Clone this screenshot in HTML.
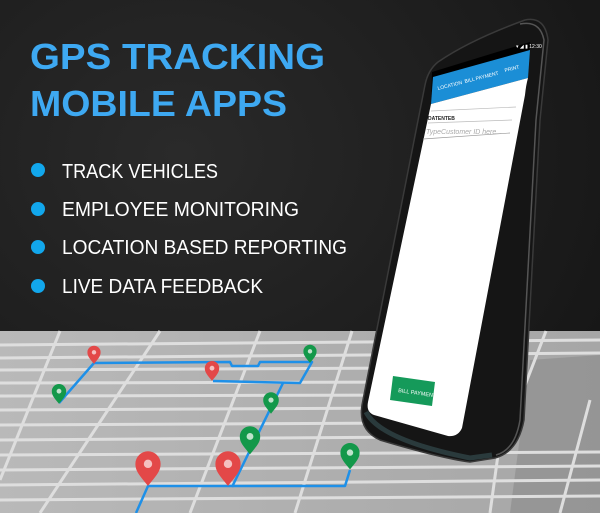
<!DOCTYPE html>
<html><head><meta charset="utf-8"><style>
html,body{margin:0;padding:0;background:#1e1e1e;width:600px;height:513px;overflow:hidden}
svg{display:block}
</style></head><body>
<svg width="600" height="513" viewBox="0 0 600 513" xmlns="http://www.w3.org/2000/svg">
<defs>
<radialGradient id="bg" cx="0.3" cy="0.3" r="0.9"><stop offset="0" stop-color="#2a2a2a"/><stop offset="1" stop-color="#141414"/></radialGradient>
<linearGradient id="mapfade" x1="0" y1="0" x2="1" y2="0"><stop offset="0" stop-color="#b9b9b9"/><stop offset="1" stop-color="#a6a6a6"/></linearGradient>
</defs>
<rect width="600" height="513" fill="url(#bg)"/>
<!-- map -->
<rect x="0" y="331" width="600" height="182" fill="url(#mapfade)"/>
<path d="M530 360 L600 355 L600 513 L510 513 Z" fill="#8a8a8a" opacity="0.6"/>
<g stroke="#dedede" stroke-width="3" fill="none">
<line x1="0" y1="345" x2="600" y2="340"/>
<line x1="0" y1="358" x2="600" y2="353"/>
<line x1="0" y1="370" x2="420" y2="368"/>
<line x1="0" y1="383" x2="420" y2="382"/>
<line x1="0" y1="396" x2="420" y2="395"/>
<line x1="0" y1="410" x2="420" y2="408"/>
<line x1="0" y1="425" x2="420" y2="423"/>
<line x1="0" y1="440" x2="420" y2="437"/>
<line x1="0" y1="455" x2="600" y2="452"/>
<line x1="0" y1="470" x2="600" y2="466"/>
<line x1="0" y1="485" x2="600" y2="480"/>
<line x1="0" y1="500" x2="600" y2="496"/>
<line x1="60" y1="331" x2="0" y2="480"/>
<line x1="160" y1="331" x2="40" y2="513"/>
<line x1="260" y1="331" x2="190" y2="513"/>
<line x1="352" y1="331" x2="295" y2="513"/>
<line x1="515" y1="331" x2="490" y2="513"/>
<line x1="546" y1="331" x2="500" y2="450"/>
<line x1="590" y1="400" x2="560" y2="513"/>
</g>
<!-- route -->
<g stroke="#1e90e8" stroke-width="2.5" fill="none" stroke-linejoin="round">
<polyline points="59,403 94,363 230,362 232,366 258,366 260,362 312,362 300,383 213,381"/>
<polyline points="283,383 232,487"/>
<polyline points="136,513 148,486 345,486 350,470"/>
</g>
<!-- pins -->
<g>
<g transform="translate(94,354) scale(0.55)"><path d="M0 18 C-8 8 -12 4 -12 -3 A12 12 0 0 1 12 -3 C12 4 8 8 0 18Z" fill="#e34848"/><circle cx="0" cy="-3" r="4" fill="#f4c0c0"/></g>
<g transform="translate(212,370) scale(0.6)"><path d="M0 18 C-8 8 -12 4 -12 -3 A12 12 0 0 1 12 -3 C12 4 8 8 0 18Z" fill="#e34848"/><circle cx="0" cy="-3" r="4" fill="#f4c0c0"/></g>
<g transform="translate(59,393) scale(0.6)"><path d="M0 18 C-8 8 -12 4 -12 -3 A12 12 0 0 1 12 -3 C12 4 8 8 0 18Z" fill="#13984a"/><circle cx="0" cy="-3" r="4" fill="#bfe3cc"/></g>
<g transform="translate(310,353) scale(0.55)"><path d="M0 18 C-8 8 -12 4 -12 -3 A12 12 0 0 1 12 -3 C12 4 8 8 0 18Z" fill="#13984a"/><circle cx="0" cy="-3" r="4" fill="#bfe3cc"/></g>
<g transform="translate(271,402) scale(0.65)"><path d="M0 18 C-8 8 -12 4 -12 -3 A12 12 0 0 1 12 -3 C12 4 8 8 0 18Z" fill="#13984a"/><circle cx="0" cy="-3" r="4" fill="#bfe3cc"/></g>
<g transform="translate(250,439) scale(0.85)"><path d="M0 18 C-8 8 -12 4 -12 -3 A12 12 0 0 1 12 -3 C12 4 8 8 0 18Z" fill="#13984a"/><circle cx="0" cy="-3" r="4" fill="#bfe3cc"/></g>
<g transform="translate(350,455) scale(0.8)"><path d="M0 18 C-8 8 -12 4 -12 -3 A12 12 0 0 1 12 -3 C12 4 8 8 0 18Z" fill="#13984a"/><circle cx="0" cy="-3" r="4" fill="#bfe3cc"/></g>
<g transform="translate(148,467) scale(1.05)"><path d="M0 18 C-8 8 -12 4 -12 -3 A12 12 0 0 1 12 -3 C12 4 8 8 0 18Z" fill="#e34848"/><circle cx="0" cy="-3" r="4" fill="#f4c0c0"/></g>
<g transform="translate(228,467) scale(1.05)"><path d="M0 18 C-8 8 -12 4 -12 -3 A12 12 0 0 1 12 -3 C12 4 8 8 0 18Z" fill="#e34848"/><circle cx="0" cy="-3" r="4" fill="#f4c0c0"/></g>
</g>
<!-- phone -->
<path d="M438 62 Q470 40 525 20 Q545 16 548 40 L540 120 L524 420 Q518 452 495 458 L470 462 Q440 458 380 440 Q358 430 362 405 L425 85 Q428 70 438 62Z" fill="#151515" stroke="#3a3a3a" stroke-width="1.5"/>
<path d="M520 24 Q540 20 544 40 L536 120 L520 420 Q515 450 496 455" fill="none" stroke="#555" stroke-width="1.5"/>
<path d="M366 412 Q380 440 470 458 L492 455" fill="none" stroke="#2a3a3c" stroke-width="5"/>
<!-- screen -->
<path d="M432 72 L530 42 L527 80 L431 104Z" fill="#000"/>
<path d="M433 77 L530 50 L528 78 L431 104Z" fill="#1b8ed6"/>
<path d="M431 104 L528 78 Q526 85 525 95 L462 428 Q458 437 448 436 L374 415 Q366 412 368 402Z" fill="#ffffff"/>
<g font-family="Liberation Sans, sans-serif" fill="#fff" font-size="5">
<text x="438" y="90" transform="rotate(-14 438 90)">LOCATION</text>
<text x="465" y="83" transform="rotate(-14 465 83)">BILL PAYMENT</text>
<text x="505" y="72" transform="rotate(-14 505 72)">PRINT</text>
<text x="516" y="48" font-size="5">▾ ◢ ▮ 12:30</text>
</g>
<line x1="431" y1="111" x2="516" y2="107" stroke="#bbb" stroke-width="0.7"/>
<text x="428" y="120" font-family="Liberation Sans, sans-serif" font-size="5" font-weight="bold" fill="#222">DATENTEB</text>
<line x1="428" y1="123" x2="512" y2="120" stroke="#bbb" stroke-width="0.7"/>
<text x="426" y="134" font-family="Liberation Sans, sans-serif" font-size="7" fill="#aaa" font-style="italic">TypeCustomer ID here...</text>
<line x1="423" y1="139" x2="510" y2="133" stroke="#999" stroke-width="0.7"/>
<path d="M393 376 L435 382 L432 406 L390 400Z" fill="#159a5a"/>
<text x="398" y="392" transform="rotate(8 398 392)" font-family="Liberation Sans, sans-serif" font-size="5.5" fill="#fff">BILL PAYMENT</text>
<!-- text -->
<g font-family="Liberation Sans, sans-serif" font-weight="bold" fill="#3ea9f2" font-size="36">
<text x="30" y="69" textLength="295" lengthAdjust="spacingAndGlyphs">GPS TRACKING</text>
<text x="30" y="116" textLength="257" lengthAdjust="spacingAndGlyphs">MOBILE APPS</text>
</g>
<g fill="#12a7ec"><circle cx="38" cy="170" r="7"/><circle cx="38" cy="209" r="7"/><circle cx="38" cy="247" r="7"/><circle cx="38" cy="286" r="7"/></g>
<g font-family="Liberation Sans, sans-serif" fill="#fff" font-size="20">
<text x="62" y="178" textLength="156" lengthAdjust="spacingAndGlyphs">TRACK VEHICLES</text>
<text x="62" y="216" textLength="237" lengthAdjust="spacingAndGlyphs">EMPLOYEE MONITORING</text>
<text x="62" y="254" textLength="285" lengthAdjust="spacingAndGlyphs">LOCATION BASED REPORTING</text>
<text x="62" y="293" textLength="201" lengthAdjust="spacingAndGlyphs">LIVE DATA FEEDBACK</text>
</g>
</svg>
</body></html>
